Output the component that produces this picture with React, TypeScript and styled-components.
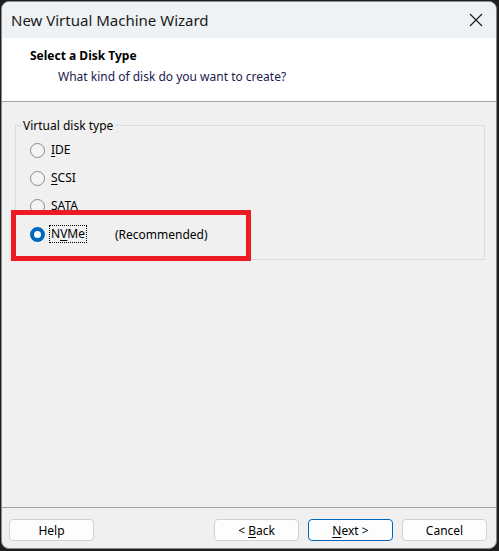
import styled, { createGlobalStyle } from 'styled-components';

const GlobalStyle = createGlobalStyle`
  html, body {
    margin: 0;
    padding: 0;
    background: #1f1f1f;
  }
  body {
    font-family: "Noto Sans", "Liberation Sans", sans-serif;
  }
`;

const Screen = styled.div`
  width: 499px;
  height: 551px;
  padding: 1px 2px 2px 1px;
  box-sizing: border-box;
`;

const Window = styled.div`
  position: relative;
  width: 100%;
  height: 100%;
  display: flex;
  flex-direction: column;
  border-radius: 8px;
  overflow: hidden;
  background: #f0f0f0;
  border: 1px solid #8a8a8a;
  box-sizing: border-box;
`;

const TitleBar = styled.div`
  height: 36px;
  flex-shrink: 0;
  display: flex;
  align-items: center;
  justify-content: space-between;
  padding: 0 13px 0 9px;
  background: #eef2f5;
  font-size: 15px;
  color: #1a1a1a;
`;

const CloseButton = styled.span`
  display: flex;
  width: 14px;
  height: 14px;
`;

const Header = styled.div`
  height: 64px;
  flex-shrink: 0;
  background: #ffffff;
  border-bottom: 1px solid #a0a0a0;
  padding: 9px 0 0 28px;
  box-sizing: border-box;
`;

const HeaderTitle = styled.div`
  font-size: 12px;
  font-weight: 700;
  color: #000000;
  line-height: 18px;
`;

const HeaderSubtitle = styled.div`
  font-size: 12px;
  color: #1b1a4f;
  line-height: 18px;
  margin: 3px 0 0 28px;
`;

const Body = styled.div`
  flex: 1;
  padding: 15px 11px 0 13px;
`;

const GroupBox = styled.fieldset`
  margin: 0;
  padding: 2px 0 4px 14px;
  border: 1px solid #dcdcdc;
  height: 143px;
  box-sizing: border-box;
`;

const Legend = styled.legend`
  font-size: 12px;
  color: #000000;
  padding: 0 1px;
  margin-left: -8px;
`;

const RadioRow = styled.div`
  display: flex;
  align-items: center;
  height: 28px;
  font-size: 12px;
  color: #000000;
`;

const RadioCircle = styled.span<{ $checked?: boolean }>`
  width: 15px;
  height: 15px;
  border-radius: 50%;
  box-sizing: border-box;
  margin-right: 4px;
  flex-shrink: 0;
  ${({ $checked }) =>
    $checked
      ? `background: #ffffff; border: 4.5px solid #0067c0;`
      : `background: #f4f4f4; border: 1px solid #8a8a8a;`}
`;

const RadioLabel = styled.span<{ $focused?: boolean }>`
  padding: 0 1px;
  line-height: 16px;
  border: 1px dotted ${({ $focused }) => ($focused ? '#000000' : 'transparent')};
`;

const Hint = styled.span`
  margin-left: 28px;
  font-size: 12px;
`;

const Mnemonic = styled.u`
  text-decoration-thickness: 1px;
  text-underline-offset: 2px;
`;

const Highlight = styled.div`
  position: absolute;
  left: 9px;
  top: 208px;
  width: 240px;
  height: 51px;
  border: 5px solid #ed1c24;
  box-sizing: border-box;
  pointer-events: none;
`;

const Footer = styled.div`
  flex-shrink: 0;
  border-top: 1px solid #a0a0a0;
  height: 41px;
  display: flex;
  align-items: flex-start;
  padding: 11px 9px 0 7px;
  box-sizing: border-box;
`;

const Spacer = styled.div`
  flex: 1;
`;

const Button = styled.button<{ $primary?: boolean }>`
  width: 85px;
  height: 22px;
  margin-left: 9px;
  padding: 0;
  font-family: inherit;
  font-size: 12px;
  color: #000000;
  background: #fdfdfd;
  border: 1px solid ${({ $primary }) => ($primary ? '#0067c0' : '#d0d0d0')};
  border-radius: 4px;
  &:first-child {
    margin-left: 0;
  }
`;

const options = [
  { key: 'ide', first: 'I', rest: 'DE' },
  { key: 'scsi', first: 'S', rest: 'CSI' },
  { key: 'sata', first: '', rest: 'SATA' },
];

export default function App() {
  return (
    <>
      <GlobalStyle />
      <Screen>
        <Window>
          <TitleBar>
            <span>New Virtual Machine Wizard</span>
            <CloseButton>
              <svg width="14" height="14" viewBox="0 0 14 14">
                <path d="M1 1L13 13M13 1L1 13" stroke="#1a1a1a" strokeWidth="1.1" />
              </svg>
            </CloseButton>
          </TitleBar>
          <Header>
            <HeaderTitle>Select a Disk Type</HeaderTitle>
            <HeaderSubtitle>What kind of disk do you want to create?</HeaderSubtitle>
          </Header>
          <Body>
            <GroupBox>
              <Legend>Virtual disk type</Legend>
              {options.map((o) => (
                <RadioRow key={o.key}>
                  <RadioCircle />
                  <RadioLabel>
                    {o.first && <Mnemonic>{o.first}</Mnemonic>}
                    {o.rest}
                  </RadioLabel>
                </RadioRow>
              ))}
              <RadioRow>
                <RadioCircle $checked />
                <RadioLabel $focused>
                  N<Mnemonic>V</Mnemonic>Me
                </RadioLabel>
                <Hint>(Recommended)</Hint>
              </RadioRow>
            </GroupBox>
          </Body>
          <Footer>
            <Button>Help</Button>
            <Spacer />
            <Button>
              &lt; <Mnemonic>B</Mnemonic>ack
            </Button>
            <Button $primary>
              <Mnemonic>N</Mnemonic>ext &gt;
            </Button>
            <Button>Cancel</Button>
          </Footer>
          <Highlight />
        </Window>
      </Screen>
    </>
  );
}
